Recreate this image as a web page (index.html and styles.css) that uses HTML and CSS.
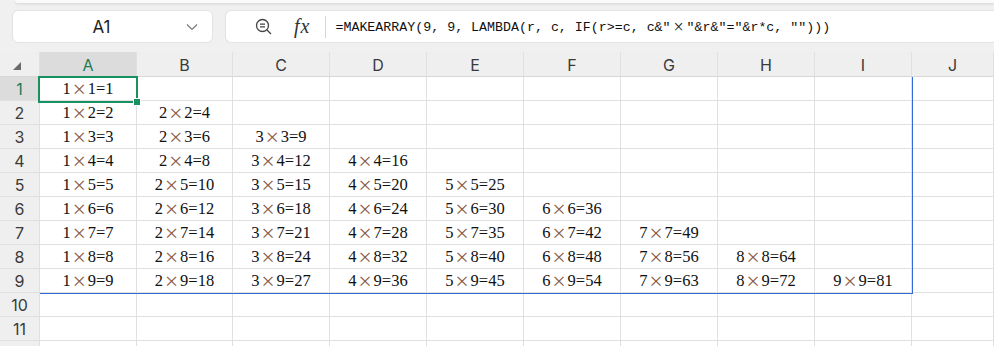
FILE: index.html
```html
<!DOCTYPE html>
<html lang="en">
<head>
  <meta charset="UTF-8" />
  <title>MAKEARRAY</title>
  <link rel="stylesheet" href="styles.css">
</head>
<body>
  <div class="topline"></div>
  <div class="formula-bar">
    <div class="name-box">
      <span class="cell-ref">A1</span>
      <svg class="chev" width="12" height="8" viewBox="0 0 12 8"><path d="M1 1.5 L6 6.5 L11 1.5" fill="none" stroke="#7a7a7a" stroke-width="1.2"/></svg>
    </div>
    <div class="fx-box">
      <svg class="lookup" width="18" height="18" viewBox="0 0 18 18">
        <circle cx="7.5" cy="7.5" r="6" fill="none" stroke="#444" stroke-width="1.3"/>
        <path d="M5 6.2 H10 M5 8.8 H10 M12 12 L16 16" stroke="#444" stroke-width="1.3" fill="none"/>
      </svg>
      <span class="fx">fx</span>
      <span class="sep"></span>
      <span class="formula">=MAKEARRAY(9, 9, LAMBDA(r, c, IF(r&gt;=c, c&amp;″<span class="fx-times">×</span>″&amp;r&amp;″=″&amp;r*c, ″″)))</span>
    </div>
  </div>

  <div class="sheet" id="sheet">
    <div class="row head">
      <div class="corner"><span class="tri"></span></div>
      <div class="ch sel">A</div><div class="ch">B</div><div class="ch">C</div><div class="ch">D</div><div class="ch">E</div>
      <div class="ch">F</div><div class="ch">G</div><div class="ch">H</div><div class="ch">I</div><div class="ch">J</div>
    </div>
    <!-- rows are filled in below -->
    <div class="spill"></div>
    <div class="active"><span class="handle"></span></div>
  </div>

  <script>
    const sheet = document.getElementById("sheet");
    const spill = sheet.querySelector(".spill");
    for (let r = 1; r <= 12; r++) {
      const row = document.createElement("div");
      row.className = "row";
      // row 12 is only a sliver at the bottom edge, so no label
      let html = '<div class="rh' + (r === 1 ? ' sel' : '') + '">' + (r < 12 ? r : '') + '</div>';
      for (let c = 1; c <= 10; c++) {
        let txt = "";
        if (r <= 9 && c <= 9 && r >= c) {
          txt = c + '<span class="x">×</span>' + r + '=' + (r * c);
        }
        html += '<div class="c">' + txt + '</div>';
      }
      row.innerHTML = html;
      sheet.insertBefore(row, spill);
    }
  </script>
</body>
</html>
```

FILE: styles.css
```css
body {
  margin: 0;
  background: #f0f0f0;
  font-family: 'Inter', 'Noto Sans', sans-serif;
  color: #222;
  width: 994px;
  height: 346px;
  overflow: hidden;
}
.topline {
  height: 3px;
  margin-left: 15px;
  background: #fafafa;
  border-radius: 0 0 0 6px;
  box-shadow: 0 1px 3px rgba(0,0,0,0.12);
}
.formula-bar {
  display: flex;
  gap: 12px;
  padding: 7px 0 9px 12px;
  height: 33px;
}
.name-box {
  width: 201px;
  box-sizing: border-box;
  background: #fff;
  border: 1px solid #e2e2e2;
  border-radius: 6px;
  display: flex;
  align-items: center;
  position: relative;
}
.cell-ref {
  flex: 1;
  text-align: center;
  font-size: 17px;
  color: #1f1f1f;
  padding-left: 4px;
}
.chev {
  margin-right: 14px;
}
.fx-box {
  flex: 1;
  background: #fff;
  border: 1px solid #e2e2e2;
  border-right: none;
  border-radius: 6px 0 0 6px;
  display: flex;
  align-items: center;
  padding-left: 29px;
}
.lookup {
  margin-top: 1px;
}
.fx {
  font-family: 'Liberation Serif', serif;
  font-style: italic;
  font-size: 20px;
  color: #333;
  margin-left: 21px;
  letter-spacing: 1px;
}
.sep {
  width: 1px;
  height: 22px;
  background: #d6d6d6;
  margin-left: 15px;
}
.formula {
  font-family: 'Liberation Mono', monospace;
  font-size: 13.3px;
  color: #111;
  margin-left: 9px;
  white-space: pre;
}
.fx-times {
  display: inline-block;
  width: 16px;
  text-align: center;
  font-family: 'Liberation Serif', serif;
  font-size: 18px;
  line-height: 1;
  vertical-align: -2px;
}

.sheet {
  position: relative;
}
.row {
  display: grid;
  grid-template-columns: 40px 97px 96px 97px 97px 97px 97px 97px 97px 97px 1fr;
  height: 24px;
}
.row.head {
  height: 25px;
}
.row > div {
  box-sizing: border-box;
  border-right: 1px solid #e0e0e0;
  border-bottom: 1px solid #e0e0e0;
  display: flex;
  align-items: center;
  justify-content: center;
}
.corner, .ch, .rh {
  background: #efefef;
  color: #3a3a3a;
  font-size: 16px;
}
.ch {
  padding-top: 2px;
}
.row.head > div {
  border-bottom: 1px solid #d8d8d8;
}
.ch.sel, .rh.sel {
  background: #dcdcdc;
  color: #1d7a55;
}
.corner {
  position: relative;
}
.tri {
  position: absolute;
  left: 13px;
  top: 10px;
  width: 0;
  height: 0;
  border-left: 8px solid transparent;
  border-bottom: 8px solid #6a6a6a;
}
.c {
  background: #fff;
  font-family: 'Liberation Serif', serif;
  font-size: 16.5px;
  color: #111;
}
.x {
  display: inline-block;
  width: 17px;
  text-align: center;
  font-size: 24px;
  line-height: 16px;
  color: #8a5c48;
  font-weight: 300;
}
.spill {
  position: absolute;
  left: 40px;
  top: 25px;
  width: 873px;
  height: 217px;
  box-sizing: border-box;
  border-right: 1.5px solid #3468d4;
  border-bottom: 1.5px solid #3468d4;
  pointer-events: none;
}
.active {
  position: absolute;
  left: 38px;
  top: 24px;
  width: 100px;
  height: 27px;
  box-sizing: border-box;
  border: 2.5px solid #17915f;
}
.handle {
  position: absolute;
  right: -5px;
  bottom: -5px;
  width: 6px;
  height: 6px;
  background: #17915f;
  border: 1px solid #fff;
}
```
